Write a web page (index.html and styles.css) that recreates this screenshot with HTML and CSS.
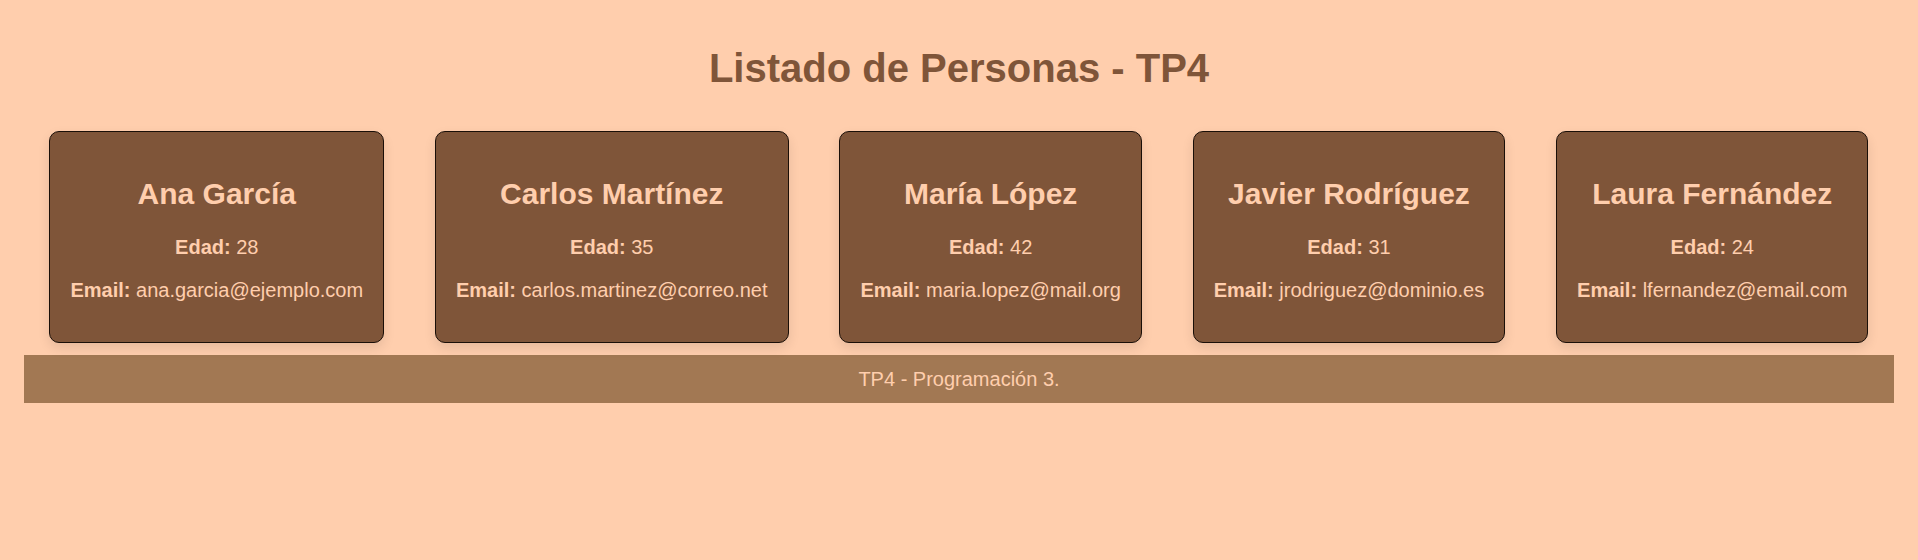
FILE: index.html
```html
<!DOCTYPE html>
<html lang="es">
<head>
<meta charset="utf-8">
<title>Listado de Personas - TP4</title>
<link rel="stylesheet" href="styles.css">
</head>
<body>
<h1 class="title">Listado de Personas - TP4</h1>
<main class="cards">
  <div class="card">
    <h2 class="card-name">Ana García</h2>
    <p class="card-line"><strong>Edad:</strong> 28</p>
    <p class="card-line"><strong>Email:</strong> ana.garcia@ejemplo.com</p>
  </div>
  <div class="card">
    <h2 class="card-name">Carlos Martínez</h2>
    <p class="card-line"><strong>Edad:</strong> 35</p>
    <p class="card-line"><strong>Email:</strong> carlos.martinez@correo.net</p>
  </div>
  <div class="card">
    <h2 class="card-name">María López</h2>
    <p class="card-line"><strong>Edad:</strong> 42</p>
    <p class="card-line"><strong>Email:</strong> maria.lopez@mail.org</p>
  </div>
  <div class="card">
    <h2 class="card-name">Javier Rodríguez</h2>
    <p class="card-line"><strong>Edad:</strong> 31</p>
    <p class="card-line"><strong>Email:</strong> jrodriguez@dominio.es</p>
  </div>
  <div class="card">
    <h2 class="card-name">Laura Fernández</h2>
    <p class="card-line"><strong>Edad:</strong> 24</p>
    <p class="card-line"><strong>Email:</strong> lfernandez@email.com</p>
  </div>
</main>
<footer class="footer">TP4 - Programación 3.</footer>
</body>
</html>
```
FILE: styles.css
```css
html, body {
  background: #ffcead;
}
body {
  margin: 0;
  padding: 20px 24px;
  font-family: "Liberation Sans", Arial, sans-serif;
  font-size: 20px;
}
.title {
  margin: 26px 0 28px;
  font-size: 40px;
  font-weight: bold;
  color: #7f5539;
  text-align: center;
}
.cards {
  display: flex;
  justify-content: space-around;
  align-items: flex-start;
}
.card {
  margin: 12px;
  padding: 20px;
  background: #7f5539;
  border: 1px solid #1a0f08;
  border-radius: 10px;
  box-shadow: 0 5px 12px rgba(0, 0, 0, 0.1);
  color: #ffcead;
  text-align: center;
}
.card-name {
  margin: 25px 0;
  font-size: 30px;
  font-weight: bold;
}
.card-line {
  margin: 20px 0;
  font-size: 20px;
}
.footer {
  padding: 12.5px 0;
  background: #a27853;
  color: #ffcead;
  text-align: center;
  font-size: 20px;
}
```
